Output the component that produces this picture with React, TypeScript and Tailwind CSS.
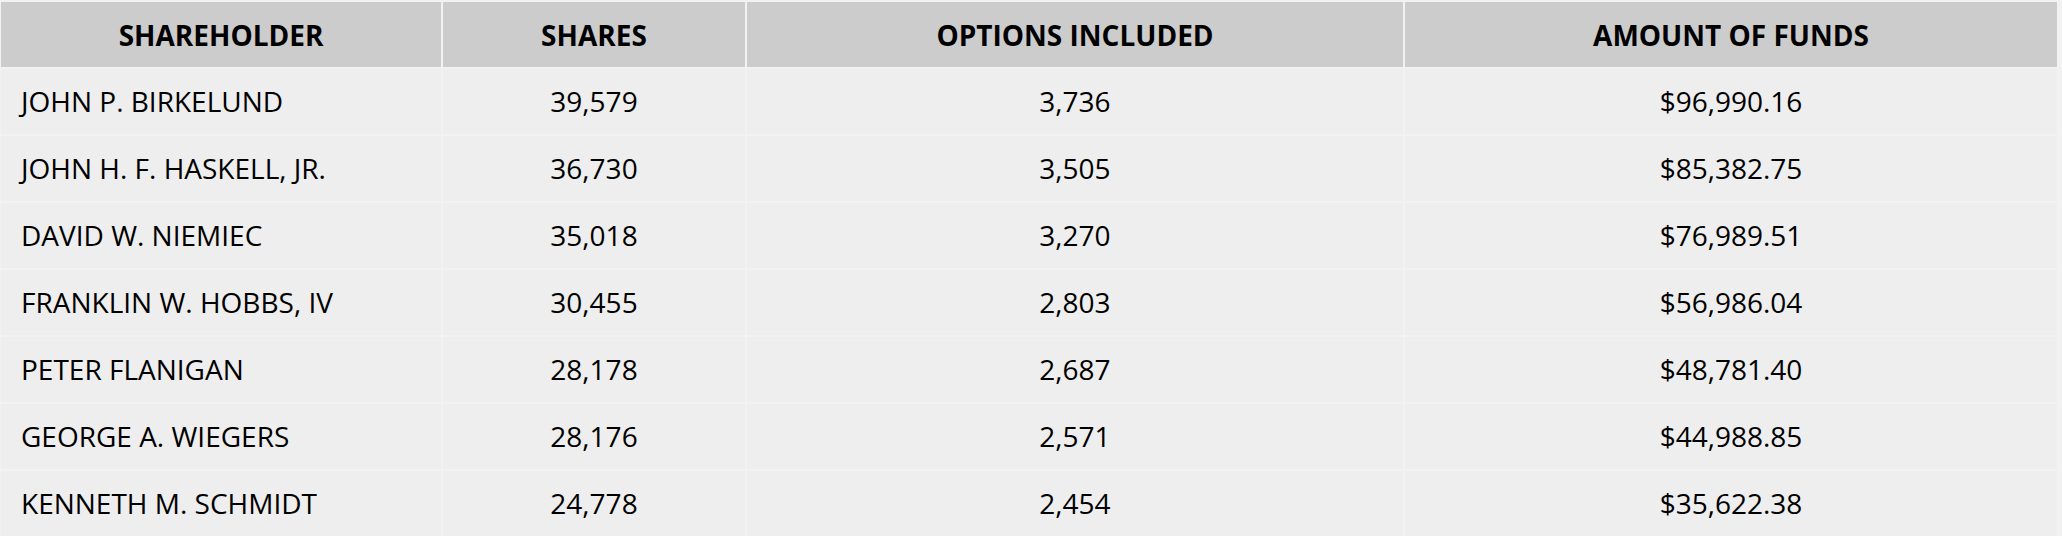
const rows = [
  ['JOHN P. BIRKELUND', '39,579', '3,736', '$96,990.16'],
  ['JOHN H. F. HASKELL, JR.', '36,730', '3,505', '$85,382.75'],
  ['DAVID W. NIEMIEC', '35,018', '3,270', '$76,989.51'],
  ['FRANKLIN W. HOBBS, IV', '30,455', '2,803', '$56,986.04'],
  ['PETER FLANIGAN', '28,178', '2,687', '$48,781.40'],
  ['GEORGE A. WIEGERS', '28,176', '2,571', '$44,988.85'],
  ['KENNETH M. SCHMIDT', '24,778', '2,454', '$35,622.38'],
]

const headers = ['SHAREHOLDER', 'SHARES', 'OPTIONS INCLUDED', 'AMOUNT OF FUNDS']

export default function App() {
  return (
    <div className="w-[2062px] h-[536px] overflow-hidden bg-[#f2f2f2] pt-[2px] pl-px pr-[5px] text-black" style={{ fontFamily: '"Open Sans", "Noto Sans", sans-serif' }}>
      <div className="grid grid-cols-[440px_302px_656px_652px] gap-[2px]">
        {headers.map(h => (
          <div key={h} className="h-[65px] bg-[#cccccc] flex items-center justify-center text-[28px] font-bold pt-[1px]">
            {h}
          </div>
        ))}
        {rows.map(r => (
          <div key={r[0]} className="contents">
            <div className="h-[65px] bg-[#eeeeee] flex items-center pl-[20px] pb-[2px] text-[28px]">{r[0]}</div>
            <div className="h-[65px] bg-[#eeeeee] flex items-center justify-center pb-[2px] text-[28px]">{r[1]}</div>
            <div className="h-[65px] bg-[#eeeeee] flex items-center justify-center pb-[2px] text-[28px]">{r[2]}</div>
            <div className="h-[65px] bg-[#eeeeee] flex items-center justify-center pb-[2px] text-[28px]">{r[3]}</div>
          </div>
        ))}
      </div>
    </div>
  )
}
